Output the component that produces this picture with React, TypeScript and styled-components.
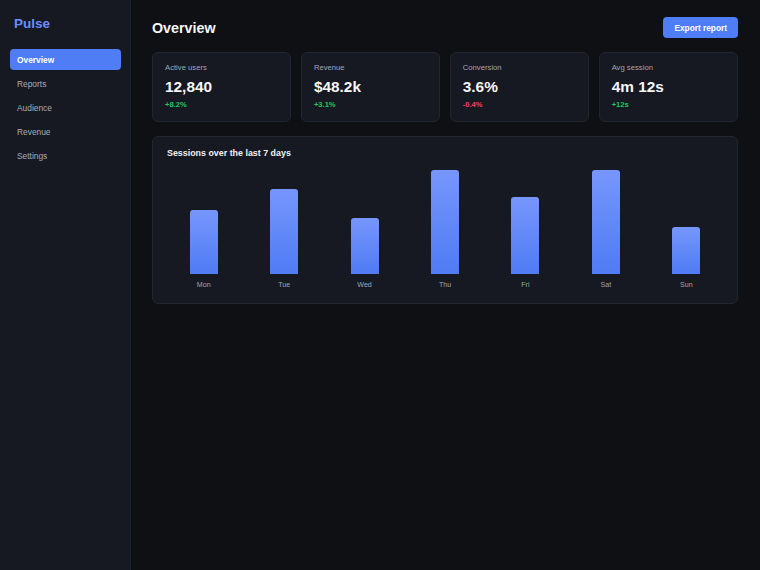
import React from "react"
import styled, { createGlobalStyle } from "styled-components"

const GlobalStyle = createGlobalStyle`
  html, body {
    margin: 0;
    padding: 0;
    background: #0f1014;
  }
  body {
    font-family: "Liberation Sans", Arial, sans-serif;
    color: #f3f4f6;
  }
`

const Shell = styled.div`
  display: flex;
  min-height: 570px;
  background: #0f1014;
`

const Sidebar = styled.aside`
  width: 131px;
  flex-shrink: 0;
  box-sizing: border-box;
  background: #161922;
  border-right: 1px solid #1d212c;
  padding: 16px 9.5px;
`

const Logo = styled.div`
  font-size: 13.5px;
  line-height: 16px;
  font-weight: 700;
  color: #6b8cff;
  padding-left: 4.5px;
  margin-bottom: 17px;
`

const NavList = styled.ul`
  list-style: none;
  margin: 0;
  padding: 0;
  display: flex;
  flex-direction: column;
  gap: 3px;
`

const NavItem = styled.li<{ $active?: boolean }>`
  height: 21px;
  display: flex;
  align-items: center;
  padding: 0 7.5px;
  border-radius: 4px;
  font-size: 8.4px;
  font-weight: ${(p) => (p.$active ? 700 : 400)};
  color: ${(p) => (p.$active ? "#ffffff" : "#a7acb7")};
  background: ${(p) => (p.$active ? "#4f7df5" : "transparent")};
`

const Main = styled.main`
  flex: 1;
  padding: 17px 22px 0 21px;
`

const Header = styled.header`
  display: flex;
  align-items: center;
  justify-content: space-between;
  height: 21px;
  margin-bottom: 14px;
`

const Title = styled.h1`
  margin: 0;
  font-size: 14.3px;
  font-weight: 700;
  color: #f5f6f8;
`

const ExportButton = styled.button`
  height: 21px;
  padding: 0 11px;
  border: none;
  border-radius: 4px;
  background: #4f7df5;
  color: #ffffff;
  font-family: inherit;
  font-size: 8.3px;
  font-weight: 700;
`

const Stats = styled.div`
  display: grid;
  grid-template-columns: repeat(4, 1fr);
  gap: 9.5px;
  margin-bottom: 14px;
`

const Card = styled.div`
  background: #161922;
  border: 1px solid #21252f;
  border-radius: 6px;
`

const StatCard = styled(Card)`
  height: 70px;
  box-sizing: border-box;
  padding: 10px 12px;
  display: flex;
  flex-direction: column;
`

const StatLabel = styled.div`
  font-size: 7.7px;
  line-height: 10px;
  color: #a0a5b0;
`

const StatValue = styled.div`
  font-size: 15.4px;
  line-height: 18px;
  font-weight: 700;
  color: #f5f6f8;
  margin: 5px 0 4px;
`

const StatDelta = styled.div<{ $down?: boolean }>`
  font-size: 7.6px;
  line-height: 10px;
  font-weight: 700;
  color: ${(p) => (p.$down ? "#f0445e" : "#22c55e")};
`

const ChartCard = styled(Card)`
  padding: 10px 14px 13px;
`

const ChartTitle = styled.h2`
  margin: 0 0 11px;
  font-size: 8.9px;
  line-height: 12px;
  font-weight: 700;
  color: #f1f2f5;
`

const Bars = styled.div`
  display: grid;
  grid-template-columns: repeat(7, 1fr);
  gap: 7px;
`

const BarColumn = styled.div`
  display: flex;
  flex-direction: column;
  align-items: center;
`

const BarTrack = styled.div`
  height: 104px;
  display: flex;
  align-items: flex-end;
`

const Bar = styled.div`
  width: 28px;
  border-radius: 3px 3px 0 0;
  background: linear-gradient(180deg, #7696fc 0%, #4f7bf4 100%);
`

const BarLabel = styled.div`
  margin-top: 6px;
  font-size: 7.1px;
  line-height: 10px;
  color: #a0a5b0;
`

const nav = ["Overview", "Reports", "Audience", "Revenue", "Settings"]

const stats = [
  { label: "Active users", value: "12,840", delta: "+8.2%" },
  { label: "Revenue", value: "$48.2k", delta: "+3.1%" },
  { label: "Conversion", value: "3.6%", delta: "-0.4%", down: true },
  { label: "Avg session", value: "4m 12s", delta: "+12s" },
]

const sessions = [
  { day: "Mon", value: 62 },
  { day: "Tue", value: 82 },
  { day: "Wed", value: 54 },
  { day: "Thu", value: 100 },
  { day: "Fri", value: 74 },
  { day: "Sat", value: 100 },
  { day: "Sun", value: 45 },
]

const App = () => {
  const max = Math.max(...sessions.map((s) => s.value))

  return (
    <>
      <GlobalStyle />
      <Shell>
        <Sidebar>
          <Logo>Pulse</Logo>
          <NavList>
            {nav.map((item, i) => (
              <NavItem key={item} $active={i === 0}>{item}</NavItem>
            ))}
          </NavList>
        </Sidebar>
        <Main>
          <Header>
            <Title>Overview</Title>
            <ExportButton>Export report</ExportButton>
          </Header>
          <Stats>
            {stats.map((s) => (
              <StatCard key={s.label}>
                <StatLabel>{s.label}</StatLabel>
                <StatValue>{s.value}</StatValue>
                <StatDelta $down={s.down}>{s.delta}</StatDelta>
              </StatCard>
            ))}
          </Stats>
          <ChartCard>
            <ChartTitle>Sessions over the last 7 days</ChartTitle>
            <Bars>
              {sessions.map((s) => (
                <BarColumn key={s.day}>
                  <BarTrack>
                    <Bar style={{ height: `${(s.value / max) * 100}%` }} />
                  </BarTrack>
                  <BarLabel>{s.day}</BarLabel>
                </BarColumn>
              ))}
            </Bars>
          </ChartCard>
        </Main>
      </Shell>
    </>
  )
}

export default App
